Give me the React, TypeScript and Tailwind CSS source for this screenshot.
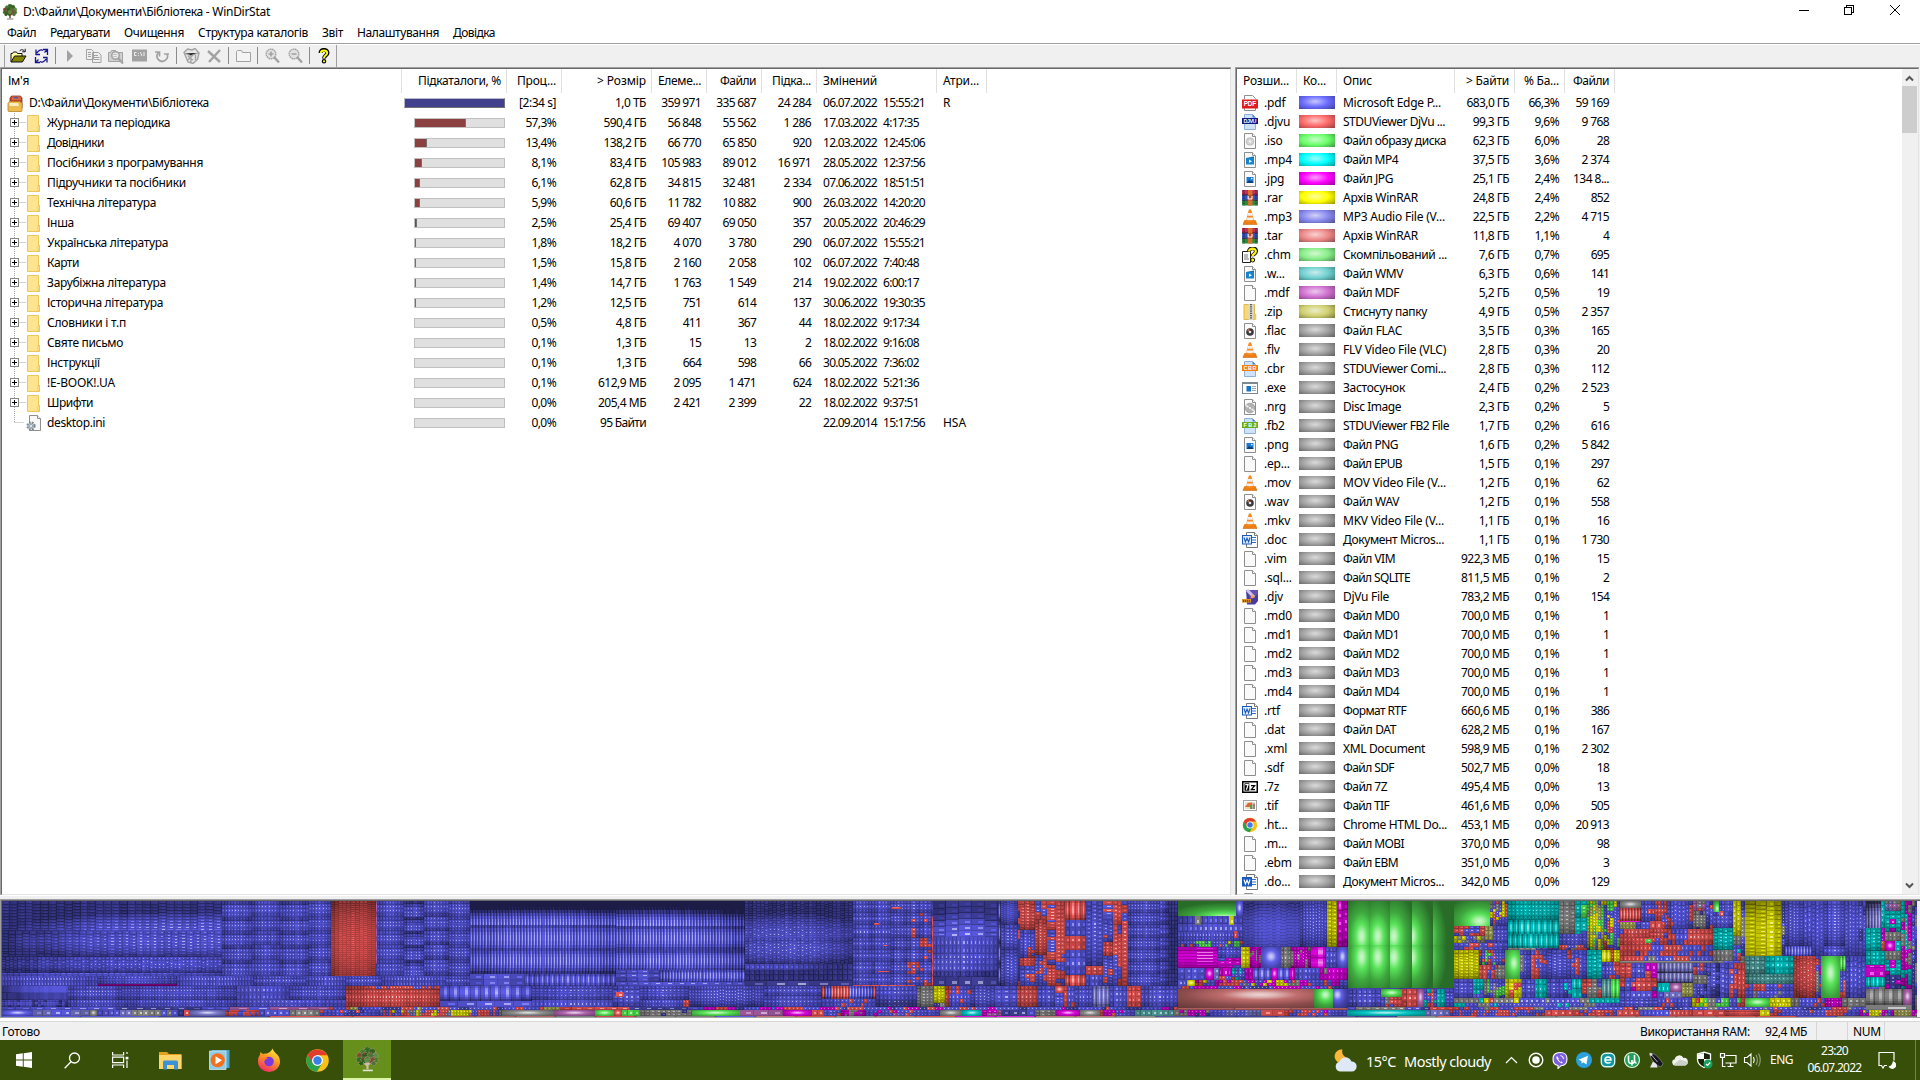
import React, { useLayoutEffect, useRef, useState } from "react";

/* ---------- text ---------- */

/** Single-line text; when `w` is given the letter spacing is tuned so that the run is `w` pixels wide. */
function T({ children, w, className = "" }: { children: string; w?: number; className?: string }) {
  const ref = useRef<HTMLSpanElement>(null);
  const [ls, setLs] = useState<number | null>(null);
  useLayoutEffect(() => {
    if (w && ref.current && ls === null) {
      setLs((w - ref.current.getBoundingClientRect().width) / children.length);
    }
  }, [w, children, ls]);
  return (
    <span
      ref={ref}
      className={"inline-block whitespace-pre " + className}
      style={w ? { letterSpacing: ls === null ? "0px" : ls + "px" } : undefined}
    >
      {children}
    </span>
  );
}

/* ---------- directory data ---------- */

type Dir = [string, number, number, string, string, string, string, string, string, string, string];
const DIRS: Dir[] = [
  ["Журнали та періодика", 123, 57.3, "57,3%", "590,4 ГБ", "56 848", "55 562", "1 286", "17.03.2022", "4:17:35", ""],
  ["Довідники", 57, 13.4, "13,4%", "138,2 ГБ", "66 770", "65 850", "920", "12.03.2022", "12:45:06", ""],
  ["Посібники з програмування", 156, 8.1, "8,1%", "83,4 ГБ", "105 983", "89 012", "16 971", "28.05.2022", "12:37:56", ""],
  ["Підручники та посібники", 139, 6.1, "6,1%", "62,8 ГБ", "34 815", "32 481", "2 334", "07.06.2022", "18:51:51", ""],
  ["Технічна література", 109, 5.9, "5,9%", "60,6 ГБ", "11 782", "10 882", "900", "26.03.2022", "14:20:20", ""],
  ["Інша", 27, 2.5, "2,5%", "25,4 ГБ", "69 407", "69 050", "357", "20.05.2022", "20:46:29", ""],
  ["Українська література", 121, 1.8, "1,8%", "18,2 ГБ", "4 070", "3 780", "290", "06.07.2022", "15:55:21", ""],
  ["Карти", 32, 1.5, "1,5%", "15,8 ГБ", "2 160", "2 058", "102", "06.07.2022", "7:40:48", ""],
  ["Зарубіжна література", 119, 1.4, "1,4%", "14,7 ГБ", "1 763", "1 549", "214", "19.02.2022", "6:00:17", ""],
  ["Історична література", 116, 1.2, "1,2%", "12,5 ГБ", "751", "614", "137", "30.06.2022", "19:30:35", ""],
  ["Словники і т.п", 79, 0, "0,5%", "4,8 ГБ", "411", "367", "44", "18.02.2022", "9:17:34", ""],
  ["Святе письмо", 76, 0, "0,1%", "1,3 ГБ", "15", "13", "2", "18.02.2022", "9:16:08", ""],
  ["Інструкції", 53, 0, "0,1%", "1,3 ГБ", "664", "598", "66", "30.05.2022", "7:36:02", ""],
  ["!E-BOOK!.UA", 68, 0, "0,1%", "612,9 МБ", "2 095", "1 471", "624", "18.02.2022", "5:21:36", ""],
  ["Шрифти", 46, 0, "0,0%", "205,4 МБ", "2 421", "2 399", "22", "18.02.2022", "9:37:51", ""],
  ["desktop.ini", 58, 0, "0,0%", "95 Байти", "", "", "", "22.09.2014", "15:17:56", "HSA"],
];

/* ---------- extension data ---------- */

type Ext = [string, string, string, string, string, string, string];
const G = "bg-[#a0a0a0]";
const EXTS: Ext[] = [
  ["pdf", ".pdf", "bg-[#6a6aff]", "Microsoft Edge P...", "683,0 ГБ", "66,3%", "59 169"],
  ["djvu", ".djvu", "bg-[#ff6a6a]", "STDUViewer DjVu ...", "99,3 ГБ", "9,6%", "9 768"],
  ["iso", ".iso", "bg-[#6aff6a]", "Файл образу диска", "62,3 ГБ", "6,0%", "28"],
  ["video", ".mp4", "bg-[#00ffff]", "Файл MP4", "37,5 ГБ", "3,6%", "2 374"],
  ["image", ".jpg", "bg-[#ff00ff]", "Файл JPG", "25,1 ГБ", "2,4%", "134 8..."],
  ["rar", ".rar", "bg-[#ffff00]", "Архів WinRAR", "24,8 ГБ", "2,4%", "852"],
  ["vlc", ".mp3", "bg-[#8888ee]", "MP3 Audio File (V...", "22,5 ГБ", "2,2%", "4 715"],
  ["rar", ".tar", "bg-[#ee8888]", "Архів WinRAR", "11,8 ГБ", "1,1%", "4"],
  ["chm", ".chm", "bg-[#88ee88]", "Скомпільований ...", "7,6 ГБ", "0,7%", "695"],
  ["video", ".w...", "bg-[#70d0d0]", "Файл WMV", "6,3 ГБ", "0,6%", "141"],
  ["file", ".mdf", "bg-[#d070d0]", "Файл MDF", "5,2 ГБ", "0,5%", "19"],
  ["zip", ".zip", "bg-[#d0d070]", "Стиснуту папку", "4,9 ГБ", "0,5%", "2 357"],
  ["audio", ".flac", G, "Файл FLAC", "3,5 ГБ", "0,3%", "165"],
  ["vlc", ".flv", G, "FLV Video File (VLC)", "2,8 ГБ", "0,3%", "20"],
  ["cbr", ".cbr", G, "STDUViewer Comi...", "2,8 ГБ", "0,3%", "112"],
  ["exe", ".exe", G, "Застосунок", "2,4 ГБ", "0,2%", "2 523"],
  ["disc", ".nrg", G, "Disc Image", "2,3 ГБ", "0,2%", "5"],
  ["fb2", ".fb2", G, "STDUViewer FB2 File", "1,7 ГБ", "0,2%", "616"],
  ["image", ".png", G, "Файл PNG", "1,6 ГБ", "0,2%", "5 842"],
  ["file", ".ep...", G, "Файл EPUB", "1,5 ГБ", "0,1%", "297"],
  ["vlc", ".mov", G, "MOV Video File (V...", "1,2 ГБ", "0,1%", "62"],
  ["audio", ".wav", G, "Файл WAV", "1,2 ГБ", "0,1%", "558"],
  ["vlc", ".mkv", G, "MKV Video File (V...", "1,1 ГБ", "0,1%", "16"],
  ["doc", ".doc", G, "Документ Micros...", "1,1 ГБ", "0,1%", "1 730"],
  ["file", ".vim", G, "Файл VIM", "922,3 МБ", "0,1%", "15"],
  ["file", ".sql...", G, "Файл SQLITE", "811,5 МБ", "0,1%", "2"],
  ["djv", ".djv", G, "DjVu File", "783,2 МБ", "0,1%", "154"],
  ["file", ".md0", G, "Файл MD0", "700,0 МБ", "0,1%", "1"],
  ["file", ".md1", G, "Файл MD1", "700,0 МБ", "0,1%", "1"],
  ["file", ".md2", G, "Файл MD2", "700,0 МБ", "0,1%", "1"],
  ["file", ".md3", G, "Файл MD3", "700,0 МБ", "0,1%", "1"],
  ["file", ".md4", G, "Файл MD4", "700,0 МБ", "0,1%", "1"],
  ["doc", ".rtf", G, "Формат RTF", "660,6 МБ", "0,1%", "386"],
  ["file", ".dat", G, "Файл DAT", "628,2 МБ", "0,1%", "167"],
  ["file", ".xml", G, "XML Document", "598,9 МБ", "0,1%", "2 302"],
  ["file", ".sdf", G, "Файл SDF", "502,7 МБ", "0,0%", "18"],
  ["7z", ".7z", G, "Файл 7Z", "495,4 МБ", "0,0%", "13"],
  ["tif", ".tif", G, "Файл TIF", "461,6 МБ", "0,0%", "505"],
  ["chrome", ".ht...", G, "Chrome HTML Do...", "453,1 МБ", "0,0%", "20 913"],
  ["file", ".m...", G, "Файл MOBI", "370,0 МБ", "0,0%", "98"],
  ["file", ".ebm", G, "Файл EBM", "351,0 МБ", "0,0%", "3"],
  ["docx", ".do...", G, "Документ Micros...", "342,0 МБ", "0,0%", "129"],
  ["file", "", "", "", "", "", ""],
];
const DESC_W: Record<string, number> = {
  "Microsoft Edge P...": 98, "STDUViewer DjVu ...": 102, "Файл образу диска": 103, "Файл MP4": 55, "Файл JPG": 50,
  "Архів WinRAR": 75, "MP3 Audio File (V...": 102, "Скомпільований ...": 104, "Файл WMV": 60, "Файл MDF": 56,
  "Стиснуту папку": 84, "Файл FLAC": 59, "FLV Video File (VLC)": 103, "STDUViewer Comi...": 103, "Застосунок": 62,
  "Disc Image": 58, "STDUViewer FB2 File": 106, "Файл PNG": 55, "Файл EPUB": 59, "MOV Video File (V...": 103,
  "Файл WAV": 56, "MKV Video File (V...": 101, "Документ Micros...": 101, "Файл VIM": 52, "Файл SQLITE": 67,
  "DjVu File": 46, "Файл MD0": 56, "Файл MD1": 56, "Файл MD2": 56, "Файл MD3": 56, "Файл MD4": 56, "Формат RTF": 63,
  "Файл DAT": 53, "XML Document": 82, "Файл SDF": 51, "Файл 7Z": 44, "Файл TIF": 46, "Chrome HTML Do...": 104,
  "Файл MOBI": 61, "Файл EBM": 55,
};

/** Width of a run of figures and units in the list font. */
function numW(s: string) {
  let w = 0;
  for (const c of s) {
    if (c >= "0" && c <= "9") w += 6.1;
    else if (c === "," || c === "." || c === ":") w += 2.7;
    else if (c === " ") w += 3.1;
    else if (c === "%") w += 9.6;
    else if (c === "М") w += 11;
    else if (c === "Г") w += 5.4;
    else if (c === "Т") w += 6.3;
    else w += 6.8;
  }
  return w;
}
const Num = ({ s }: { s: string }) => (s ? <T w={s === "[2:34 s]" ? 37 : s === "95 Байти" ? 46 : numW(s)}>{s}</T> : null);

/* ---------- icons ---------- */

function Page({ children }: { children?: React.ReactNode }) {
  return (
    <>
      <path d="M2.5.5h8l3 3v12h-11z" fill="#fafafa" stroke="#8e8e8e" />
      <path d="M10.5.5v3h3" fill="#fff" stroke="#8e8e8e" />
      {children}
    </>
  );
}

function Banner({ color, label }: { color: string; label: string }) {
  return (
    <>
      <path d="M2.5.5h8l3 3v12h-11z" fill="#cfe2f7" stroke="#8fb0d8" />
      <path d="M10.5.5v3h3z" fill="#3f7fd0" />
      <rect y="4" width="16" height="6" fill={color} />
      <text x="8" y="9" fontSize="5.4" fontWeight="700" fill="#fff" textAnchor="middle" textLength="13" fontFamily="Liberation Sans, sans-serif">{label}</text>
    </>
  );
}

function Chrome() {
  return (
    <>
      <circle cx="8" cy="8" r="7.2" fill="#fbc116" />
      <path d="M1.77 4.4A7.2 7.2 0 0 0 7.6 15.2L11 9.7 8 8 4.8 9z" fill="#2ba24c" />
      <path d="M1.77 4.4 5 9.7 8 8V4.6h6.2A7.2 7.2 0 0 0 1.77 4.4z" fill="#e33b2e" />
      <circle cx="8" cy="8" r="3.5" fill="#fff" />
      <circle cx="8" cy="8" r="2.7" fill="#3a7ee8" />
    </>
  );
}

function FileIcon({ kind }: { kind: string }) {
  let body: React.ReactNode = <Page />;
  if (kind === "pdf")
    body = (
      <>
        <path d="M2.5 4V.5h8l3 3V4M2.5 12v3.5h11V12" fill="#fafafa" stroke="#8e8e8e" />
        <rect y="4.5" width="16" height="9" fill="#e01b1b" />
        <text x="8" y="11.4" fontSize="6.4" fontWeight="700" fill="#fff" textAnchor="middle" textLength="12.5" fontFamily="Liberation Sans, sans-serif">PDF</text>
      </>
    );
  else if (kind === "djvu") body = <Banner color="#0a1a80" label="DJVU" />;
  else if (kind === "cbr") body = <Banner color="#f57f0e" label="CBR" />;
  else if (kind === "fb2") body = <Banner color="#5fb01c" label="FB2" />;
  else if (kind === "iso")
    body = <Page><circle cx="8" cy="8.5" r="3.8" fill="#d4d4d4" stroke="#a8a8a8" strokeWidth=".6" /><circle cx="8" cy="8.5" r="1.2" fill="#f5f5f5" /></Page>;
  else if (kind === "disc")
    body = <Page><circle cx="8" cy="9" r="4.8" fill="#b4b4b4" stroke="#888" strokeWidth=".6" /><path d="m8 9-4-2.5M8 9l4 2.6" stroke="#eee" strokeWidth="1.6" /><circle cx="8" cy="9" r="1.6" fill="#f5f5f5" stroke="#888" strokeWidth=".5" /></Page>;
  else if (kind === "video")
    body = <Page><rect x="4" y="6" width="8" height="6.5" fill="#1583cf" /><path d="m4 6 8-1.6V6z" fill="#0e6cb0" /><path d="m7 7.6 3 1.7-3 1.7z" fill="#fff" /></Page>;
  else if (kind === "image")
    body = <Page><rect x="4.5" y="6" width="7" height="6" fill="#1a7ad0" /><path d="m4.5 12 2.6-3 1.6 1.4 1-.8 1.8 2.4z" fill="#0c3c78" /><circle cx="9.8" cy="7.6" r=".8" fill="#fff" /></Page>;
  else if (kind === "audio")
    body = <Page><circle cx="8" cy="9" r="3.8" fill="#3a3a3a" /><path d="M8 9 5 7.2 6.8 5.6z" fill="#c87a50" /><circle cx="8" cy="9" r="1.3" fill="#e8e0f0" /></Page>;
  else if (kind === "rar")
    body = (
      <>
        <rect x="0" y="0" width="16" height="5" fill="#c22f57" /><rect x="0" y="5" width="16" height="5.5" fill="#3455b8" /><rect x="0" y="10.5" width="16" height="5" fill="#2c8a3d" />
        <path d="M0 4.8h16M0 10.3h16" stroke="#2a1a3c" strokeWidth=".8" />
        <path d="M2 0v15.5M14 0v15.5" stroke="#201838" strokeWidth="1" strokeDasharray="1.5 1" />
        <rect x="6" y="0" width="4.4" height="15.5" fill="#d8702a" /><rect x="5" y="5" width="6.4" height="5.5" fill="#b34a30" />
        <path d="M6.2 6v3h3.8V6" stroke="#fff" fill="none" />
      </>
    );
  else if (kind === "vlc")
    body = (
      <>
        <path d="M2.6 11.5h10.8l1.6 4H1z" fill="#ef7d10" stroke="#b95c08" strokeWidth=".5" />
        <path d="M6.8.8q1.2-1 2.4 0L12.2 12q-4.2 2.4-8.4 0z" fill="#f58a1f" />
        <path d="M5.9 4h4.2l.7 2.7H5.200zM4.700 8.600h6.600l.5 2q-3.800 1.500-7.600 0z" fill="#eef0f4" />
      </>
    );
  else if (kind === "chm")
    body = (
      <>
        <path d="M.5 4.5h8v11h-8z" fill="#fff" stroke="#222" /><path d="M2 8h4M2 10h4M2 12h5" stroke="#555" strokeWidth=".8" />
        <path d="M7 4.5C7 .2 14.5.2 14 4.6c-.3 2.4-3.3 2.2-3.3 4.6" fill="none" stroke="#111" strokeWidth="4" />
        <path d="M7 4.5C7 .8 14.2.8 13.8 4.6c-.3 2.2-3.1 2.2-3.1 4.4" fill="none" stroke="#ffee10" strokeWidth="2.3" />
        <circle cx="10.7" cy="13" r="2" fill="#ffee10" stroke="#111" />
      </>
    );
  else if (kind === "zip")
    body = (
      <>
        <path d="M2 .5h10.5v15H2z" fill="#f8d974" stroke="#e0b848" /><rect x="6.5" y="0" width="5" height="16" fill="#d7d7d2" />
        <path d="M9 0v15.5" stroke="#5c5c5c" strokeWidth="2" strokeDasharray="1.2 1" /><rect x="12" y="10" width="2" height="5.5" fill="#f2cd60" stroke="#e0b848" strokeWidth=".5" />
      </>
    );
  else if (kind === "exe")
    body = (
      <>
        <rect x=".5" y="2.5" width="15" height="11" fill="#fff" stroke="#7e8890" /><path d="M0 3h16" stroke="#7e8890" strokeWidth="2" />
        <rect x="4.5" y="6" width="4.5" height="5.5" fill="#1673cc" /><path d="M10 6.5h4M10 8.5h4M10 10.5h4" stroke="#9aa4ac" />
      </>
    );
  else if (kind === "doc" || kind === "docx")
    body = (
      <>
        <path d="M4.5.5h8l3 3v12h-11z" fill="#fff" stroke="#777" /><path d="M12.5.5v3h3" fill="#fff" stroke="#777" />
        <path d="M10 5.5h4M10 8h4M10 10.5h4" stroke="#2f6fd0" />
        <rect x=".5" y="3.5" width="9" height="8.5" fill={kind === "docx" ? "#185abd" : "#e4eefb"} stroke="#185abd" />
        <path d="m2 5.5 1.4 4.4L5 6.2l1.6 3.7L8 5.5" fill="none" stroke={kind === "docx" ? "#fff" : "#185abd"} strokeWidth="1.1" />
      </>
    );
  else if (kind === "djv")
    body = (
      <>
        <path d="M4 1h12v11l-3 3.5H5z" fill="#4a3a9c" /><path d="M4 1h12v4L9 11z" fill="#6450b4" /><path d="m5 1 7 7" stroke="#ccc4ec" strokeWidth="3" /><path d="m10 5 3 3.4-4.6.8z" fill="#f0a83c" />
        <rect x="0" y="10" width="9" height="3.6" fill="#e09428" /><path d="M1 12h7" stroke="#6a3a0c" strokeWidth="1.4" strokeDasharray="1.3 .7" />
      </>
    );
  else if (kind === "7z")
    body = (
      <>
        <rect y="2" width="16" height="12" fill="#000" /><rect x="1.5" y="3.5" width="13" height="9" fill="#fff" /><rect x="2.5" y="4.3" width="4.8" height="7.4" fill="#000" />
        <path d="M3.3 5.7h2.8L4.4 10.8" stroke="#fff" fill="none" strokeWidth="1.2" /><path d="M9 6.6h3.6L9.4 10.6H13" stroke="#000" fill="none" strokeWidth="1.3" />
      </>
    );
  else if (kind === "tif")
    body = (
      <>
        <rect x="1.5" y="2.5" width="13" height="10" fill="#fff" stroke="#a4a4a4" /><rect x="3" y="4" width="10" height="7" fill="#e8e0d0" />
        <path d="m3 9 3-4 4-.6V9z" fill="#e0662c" /><rect x="8" y="7" width="2" height="4" fill="#58a040" /><rect x="10.5" y="5.5" width="2.5" height="5.5" fill="#98867a" />
      </>
    );
  else if (kind === "chrome") body = <Chrome />;
  return <svg width="16" height="16" viewBox="0 0 16 16" className="block shrink-0">{body}</svg>;
}

const LEAVES = [
  [8, 2.2, 2.2], [5, 3.4, 2], [11, 3.2, 2.1], [3, 5.6, 1.9], [13, 5.6, 1.9], [6.5, 5.5, 2.2], [9.8, 5.8, 2.2], [2.8, 8.2, 1.8], [13.2, 8.4, 1.8], [5.6, 8.4, 2], [10.6, 8.6, 2], [8, 8, 2], [4, 10.4, 1.5], [12, 10.5, 1.5],
];
const LEAF_FILL = ["#2f6b22", "#4a7a30", "#33601f", "#7c4a2c", "#5d8b48", "#2a5a1c", "#4f7038"];
function Tree({ size, pale }: { size: number; pale?: boolean }) {
  return (
    <svg width={size} height={size} viewBox="0 0 16 16" className="block shrink-0">
      <path d="M8 6.5v7.8M8 12 5.4 9.5M8 11.4l3-2.4" stroke={pale ? "#d0bca8" : "#5b4028"} strokeWidth="1.4" />
      {LEAVES.map(([x, y, r], i) => (
        <circle key={i} cx={x} cy={y} r={r} fill={LEAF_FILL[i % 7]} stroke={pale ? "#b9a68c" : "#5f7a4c"} strokeWidth=".45" strokeDasharray=".8 .7" />
      ))}
      <path d="M5.4 4.2h1M9.6 3.8h1M7.4 6.6h1M11.6 7h1M4 7.4h1M9 8.8h1" stroke="#a44336" strokeWidth=".8" />
      <path d="M5 15h6.4" stroke={pale ? "#e4e4d8" : "#89796a"} strokeWidth="1" />
    </svg>
  );
}

const FolderIcon = () => (
  <svg width="13" height="17" viewBox="0 0 13 17" className="block">
    <path d="M.5.5h11v9.8h1v6.2H.5z" fill="#ffe48f" stroke="#ebc859" />
    <path d="M11 16V11q0-.8.8-.8t.8.8v5z" fill="#ffeaa6" stroke="#e6bd45" strokeWidth=".7" />
  </svg>
);

/* ---------- toolbar ---------- */

const Ico = ({ children, w = 16 }: { children: React.ReactNode; w?: number }) => (
  <svg width={w} height="16" viewBox={"0 0 " + w + " 16"} className="block shrink-0">{children}</svg>
);
const Sep = ({ m }: { m: string }) => <span className={"h-[17px] w-px shrink-0 bg-[#8a8a8a] " + m} />;
const DIM = "#a2a2a2";

function Toolbar() {
  return (
    <div className="flex h-[22px] items-center bg-[#f0f0f0] pb-px pl-[4px]">
      <span className="h-[22px] w-px shrink-0 bg-[#a0a0a0]" />
      <span className="ml-[5px]">
        <Ico w={17}>
          <path d="M1 14V5.5h1.500L3.500 4h3l1 1.500H12V8" fill="#ffff9c" stroke="#111" /><path d="m1 14 3.600-6H16l-3.600 6z" fill="#848400" stroke="#111" />
          <path d="M9.500 3.200C11 1 13.200 1.400 14.600 3.400M15.200.800v3h-3" fill="none" stroke="#111" />
        </Ico>
      </span>
      <span className="ml-[7px]">
        <Ico w={15}>
          <path d="M2 7V1.500M1.500 6.500H6M3 5C4.500 1.800 7.500 1.500 9 2.500" fill="none" stroke="#14148c" strokeWidth="1.300" />
          <path d="M9 1.500h4.500V6M13 2l-2.500 2.500M13.500 4v3" fill="none" stroke="#14148c" strokeWidth="1.300" />
          <path d="M13 9v5.500M13.500 9.500H9M12 11C10.500 14.200 7.500 14.500 6 13.500" fill="none" stroke="#14148c" strokeWidth="1.300" />
          <path d="M6 14.500H1.500V10M2 14l2.500-2.500M1.500 12V9" fill="none" stroke="#14148c" strokeWidth="1.300" />
        </Ico>
      </span>
      <Sep m="ml-[6px]" />
      <span className="ml-[10px]"><Ico w={8}><path d="M1 2v12l6-6z" fill={DIM} /></Ico></span>
      <span className="ml-[12px]">
        <Ico>
          <path d="M.5 1.500h5l2 2v8h-7zM6.500 4.500h6l2.500 2.500v7.500h-8.500z" fill="#f0f0f0" stroke={DIM} /><path d="M2 4.500h3M2 6.500h3M2 8.500h3M8 7.500h4M8 9.500h5.500M8 11.500h5.500" stroke={DIM} />
        </Ico>
      </span>
      <span className="ml-[6px]">
        <Ico>
          <path d="M.5 4.500h2l1-2h4l1 2h6v9H.5z" fill="#d0d0d0" stroke={DIM} /><circle cx="7.500" cy="7.500" r="3.800" fill="#e8e8e8" stroke={DIM} strokeWidth="1.500" /><path d="M5.500 6.500h4M5.500 8.500h4" stroke={DIM} strokeDasharray="1 1" /><path d="m10 10 5 5.500" stroke={DIM} strokeWidth="2.200" />
        </Ico>
      </span>
      <span className="ml-[8px]">
        <Ico w={15}>
          <path d="M0 1.500h15v12H0z" fill={DIM} /><path d="M4.500 4.500H2.500v3h2M6.500 5v.800M6.500 7v.800M8.500 4.200l1.500 4M12 4v4" stroke="#f0f0f0" fill="none" />
        </Ico>
      </span>
      <span className="ml-[8px]"><Ico w={15}><path d="M3.500 4.500A5.200 5.200 0 1 0 12 6M0 4h4.500v4.500M9 6h5" fill="none" stroke={DIM} strokeWidth="1.700" /></Ico></span>
      <Sep m="ml-[6px]" />
      <span className="ml-[6px]">
        <Ico w={17}>
          <path d="M1 4.500 4.500 1 9 2l3-1.500 4 4.500-1.500 6.500-4.500 4-5-1.500z" fill="#e6e6e6" stroke={DIM} strokeWidth="1.400" /><path d="m2 5.500 6 2L15 5M8 8v6M5 8l5 4M10 7 5 12M12.500 7v5" stroke={DIM} strokeWidth="1.300" />
        </Ico>
      </span>
      <span className="ml-[7px]"><Ico w={14}><path d="m1 3 12 11M13 2 2 14" stroke={DIM} strokeWidth="2.400" /></Ico></span>
      <Sep m="ml-[7px]" />
      <span className="ml-[7px]"><Ico><path d="M.5 13.500v-10l1-1h4l1 2h8v9z" fill="#f4f4f4" stroke={DIM} /></Ico></span>
      <Sep m="ml-[5px]" />
      {["M6 3.500v5M3.500 6h5", "M3.500 6h5"].map((d, i) => (
        <span key={i} className={i ? "ml-[8px]" : "ml-[7px]"}>
          <Ico w={15}><circle cx="6" cy="6" r="4.800" fill="#e2e2e2" stroke={DIM} strokeWidth="1.400" strokeDasharray="1.600 .5" /><path d={d} stroke={DIM} strokeWidth="1.600" /><path d="m9 9 5 5.500" stroke={DIM} strokeWidth="2.400" /></Ico>
        </span>
      ))}
      <Sep m="ml-[6px]" />
      <span className="ml-[8px]">
        <Ico w={12}>
          <path d="M2.500 5C2.500.800 9.500.800 9.500 5 9.500 7.200 6 7.500 6 10.500" fill="none" stroke="#000" strokeWidth="4" />
          <path d="M2.700 5C3 1.600 9.200 1.600 9.200 5 9.200 7.200 6 7.500 6 10" fill="none" stroke="#ffff00" strokeWidth="1.900" />
          <circle cx="6" cy="13.300" r="1.700" fill="#ffff00" stroke="#000" strokeWidth="1.200" />
        </Ico>
      </span>
      <span className="ml-[6px] h-[22px] w-px shrink-0 bg-[#a0a0a0]" />
    </div>
  );
}

/* ---------- directory list ---------- */

const GRID_L = "grid grid-cols-[400px_105px_55px_90px_55px_55px_55px_120px_50px]";
const HEAD_L: [string, number, boolean][] = [
  ["Ім'я", 21, false], ["Підкаталоги, %", 83, true], ["Проц...", 39, true], ["> Розмір", 49, true], ["Елеме...", 43, true],
  ["Файли", 36, true], ["Підка...", 39, true], ["Змінений", 54, false], ["Атри...", 36, false],
];

function Cell({ children, right }: { children?: React.ReactNode; right?: boolean }) {
  return <div className={"flex items-center px-[6px] " + (right ? "justify-end" : "")}>{children}</div>;
}

function DateCell({ d, t }: { d: string; t: string }) {
  return (
    <div className="flex items-center gap-[6px] pl-[6px]">
      <T w={54}>{d}</T>
      <T w={numW(t)}>{t}</T>
    </div>
  );
}

function DirList() {
  return (
    <div className="flex h-[825px] w-[1228px] flex-col overflow-hidden bg-white">
      <div className={GRID_L + " h-[24px]"}>
        {HEAD_L.map(([s, w, r]) => (
          <div key={s} className={"flex items-center border-r border-[#e0e0e0] " + (r ? "justify-end pr-[5px]" : "pl-[6px]")}>
            <T w={w}>{s}</T>
          </div>
        ))}
      </div>
      <div className={GRID_L + " h-[20px]"}>
        <div className="flex items-center pl-[5px]">
          <svg width="17" height="17" viewBox="0 0 17 17" className="block">
            <path d="M3 7V3L4.500 1h9L15 3v10H3z" fill="#b8452e" stroke="#7c3220" strokeWidth=".8" /><path d="M5 1.500h8.500l.8 3.500H4.500z" fill="#e0663c" /><path d="M7 2h4l.5 1.500H6.500z" fill="#5a58a8" />
            <path d="M1 8.500 2.500 6.500h10L15 8v7.500q0 1-1 1H2q-1 0-1-1z" fill="#eebb4e" stroke="#b8821c" strokeWidth=".8" /><path d="M2.500 8h8.500l1 3H2.500z" fill="#fbeec0" />
          </svg>
          <T w={180} className="ml-[5px]">{"D:\\Файли\\Документи\\Бібліотека"}</T>
        </div>
        <div className="flex items-center pl-[2px]"><div className="h-[10px] w-[101px] border border-t-[#b8b8c8] border-r-[#707070] border-b-[#707070] border-l-[#b8b8c8] bg-[#40408c]" /></div>
        <Cell right><Num s="[2:34 s]" /></Cell>
        <Cell right><Num s="1,0 ТБ" /></Cell>
        <Cell right><Num s="359 971" /></Cell>
        <Cell right><Num s="335 687" /></Cell>
        <Cell right><Num s="24 284" /></Cell>
        <DateCell d="06.07.2022" t="15:55:21" />
        <Cell><T>R</T></Cell>
      </div>
      {DIRS.map(([name, nw, pct, ps, size, items, files, subs, d, t, attr], i) => {
        const last = i === DIRS.length - 1;
        return (
          <div key={name} className={GRID_L + " h-[20px]"}>
            <div className="flex items-center pl-[7px]">
              <svg width={last ? 15 : 17} height="20" viewBox={last ? "0 0 15 20" : "0 0 17 20"} className="block shrink-0">
                <path d={last ? "M5.500 0v10" : "M5.500 0v20"} stroke="#a8a8a8" strokeDasharray="1 1" />
                <path d="M5.500 9.500H17" stroke="#a8a8a8" strokeDasharray="1 1" />
                {!last && (
                  <>
                    <rect x="1.500" y="5.500" width="8" height="8" fill="#fff" stroke="#848484" /><path d="M3 9.500h5M5.500 7v5" stroke="#000" />
                  </>
                )}
              </svg>
              {last ? (
                <svg width="17" height="17" viewBox="0 0 17 17" className="block">
                  <path d="M5.500.5h8l3 3v12h-11z" fill="#f8f8f8" stroke="#8e8e8e" /><path d="M13.500.5v3h3" fill="#fff" stroke="#8e8e8e" />
                  <circle cx="7" cy="11" r="3.600" fill="#b9c3ca" stroke="#7c8890" strokeWidth="2" strokeDasharray="1.700 1.200" /><circle cx="7" cy="11" r="1.500" fill="#fff" stroke="#7c8890" strokeWidth=".7" />
                </svg>
              ) : (
                <span className="ml-px"><FolderIcon /></span>
              )}
              <T w={nw} className={last ? "ml-[6px]" : "ml-[7px]"}>{name}</T>
            </div>
            <div className="flex items-center pl-[12px]">
              <div className="flex h-[10px] w-[91px] border border-[#c0c0c0] bg-[#e0e0e0]">
                {pct > 0 && (
                  <div className="h-full border-r border-[#707070] bg-[#8c4040]" style={{ width: Math.max(1, Math.floor(pct * 0.9)) + "px" }} />
                )}
              </div>
            </div>
            <Cell right><Num s={ps} /></Cell>
            <Cell right><Num s={size} /></Cell>
            <Cell right><Num s={items} /></Cell>
            <Cell right><Num s={files} /></Cell>
            <Cell right><Num s={subs} /></Cell>
            <DateCell d={d} t={t} />
            <Cell>{attr ? <T w={23}>{attr}</T> : null}</Cell>
          </div>
        );
      })}
    </div>
  );
}

/* ---------- extension list ---------- */

const GRID_R = "grid grid-cols-[60px_40px_118px_60px_50px_50px]";
const HEAD_R: [string, number, boolean][] = [
  ["Розши...", 46, false], ["Ко...", 23, false], ["Опис", 29, false], ["> Байти", 43, true], ["% Ба...", 35, true], ["Файли", 36, true],
];

function ExtList() {
  return (
    <div className="flex h-[825px] w-[665px] flex-col overflow-hidden bg-white">
      <div className={GRID_R + " h-[24px] shrink-0"}>
        {HEAD_R.map(([s, w, r]) => (
          <div key={s} className={"flex items-center border-r border-[#e0e0e0] " + (r ? "justify-end pr-[5px]" : "pl-[6px]")}>
            <T w={w}>{s}</T>
          </div>
        ))}
      </div>
      {EXTS.map(([kind, ext, color, desc, bytes, pct, files], i) => (
        <div key={i} className={GRID_R + " h-[19px] shrink-0"}>
          <div className="flex items-center gap-[6px] pl-[5px]"><FileIcon kind={kind} /><T className="tracking-[-0.2px]">{ext}</T></div>
          <div className="flex items-center pl-[2px]">
            {color && <div className={"h-[13px] w-[36px] bg-[radial-gradient(ellipse_75%_85%_at_45%_42%,rgba(255,255,255,0.62)_0%,rgba(255,255,255,0)_50%,rgba(0,0,0,0.42)_100%)] " + color} />}
          </div>
          <Cell>{desc ? <T w={DESC_W[desc]}>{desc}</T> : null}</Cell>
          <Cell right><Num s={bytes} /></Cell>
          <Cell right><Num s={pct} /></Cell>
          <Cell right>{files.endsWith("...") ? <T w={36}>{files}</T> : <Num s={files} />}</Cell>
        </div>
      ))}
    </div>
  );
}

/* ---------- treemap ---------- */

const RGB: Record<string, [number, number, number]> = {
  B: [92, 92, 232], R: [232, 84, 84], G: [84, 226, 84], C: [0, 196, 196], M: [216, 0, 216], Y: [222, 222, 0], g: [138, 138, 138],
  P: [120, 120, 205], S: [190, 104, 104], T: [80, 156, 156], V: [170, 96, 170], O: [170, 170, 90], D: [66, 66, 160],
};
function shade(c: string, f: number) {
  const v = RGB[c].map((k) => Math.round(f <= 1 ? k * f : k + (255 - k) * Math.min(1, (f - 1) * 1.5)));
  return "rgb(" + v.join(",") + ")";
}

/* x0, y0, x1, y1, colours, cell width, cell height, peak x, peak y */
type Region = [number, number, number, number, string, number, number, number?, number?];
const MAP: Region[] = [
  [2, 901, 222, 931, "B", 8, 3, 0.8, 1], [2, 931, 222, 957, "B", 7, 3, 0.75, 0.4], [2, 957, 222, 973, "B", 4, 2.5, 0.7, 0.4], [2, 973, 222, 976, "B", 6, 2],
  ...([901, 917, 931, 945, 960] as number[]).flatMap((y): Region[] => {
    const y1 = y === 901 ? 917 : y === 960 ? 976 : y + (y === 945 ? 15 : 14);
    return [
      [222, y, 252, y1, "B", 3, 4, 0.5, 0.6], [252, y, 280, y1, "B", 3, 4, 0.5, 0.5], [280, y, 309, y1, "B", 3, 4, 0.5, 0.6], [309, y, 331, y1, "B", 3, 3, 0.5, 0.5],
      [377, y, 404, y1, "B", 3, 4, 0.5, 0.5], [404, y, 424, y1, "B", 3, 3, 0.5, 0.7], [424, y, 449, y1, "B", 3, 4, 0.5, 0.4], [449, y, 470, y1, "B", 3, 3, 0.5, 0.5],
    ];
  }),
  [331, 901, 376, 976, "R", 4, 2, 0.5, 0.55], [376, 901, 377, 976, "VDG", 1, 12],
  [2, 976, 98, 986, "B", 3, 5], [98, 976, 177, 984, "B", 3, 3], [98, 984, 177, 986, "M", 80, 2, 0.5, 2], [177, 976, 254, 986, "B", 3, 5], [254, 976, 306, 986, "B", 3, 3], [306, 976, 346, 986, "B", 3, 5], [346, 976, 382, 986, "B", 3, 4], [382, 976, 446, 986, "B", 3, 5], [446, 976, 470, 986, "B", 3, 3],
  [470, 901, 616, 925, "B", 3, 24, 0.5, 1], [470, 925, 616, 951, "B", 3, 26, 0.5, 0.5], [470, 951, 616, 974, "B", 3, 23, 0.5, 0.4], [470, 974, 525, 986, "B", 14, 6], [525, 974, 616, 986, "B", 5, 12],
  [2, 986, 68, 1000, "B", 2, 8, 0.8, 0.3], [2, 1000, 68, 1007, "BBDB", 3, 2], [68, 986, 122, 1000, "B", 3, 4], [68, 1000, 122, 1007, "B", 3, 3], [122, 986, 237, 1000, "B", 3, 3], [122, 1000, 237, 1007, "B", 3, 3], [237, 986, 290, 1000, "B", 4, 6], [290, 986, 346, 1000, "B", 3, 4], [237, 1000, 346, 1007, "B", 4, 4],
  [346, 986, 440, 1007, "R", 3, 4, 0.5, 0.5], [366, 986, 440, 989, "RRB", 3, 3], [440, 986, 532, 1001, "B", 10, 15, 0.5, 0.4], [440, 1001, 532, 1007, "B", 18, 6], [532, 986, 613, 1000, "B", 4, 3], [532, 1000, 613, 1007, "B", 4, 7], [613, 986, 640, 1007, "B", 5, 4], [616, 992, 624, 997, "R", 8, 5],
  [2, 1007, 230, 1010, "BBD", 14, 3], [230, 1007, 330, 1010, "MDVB", 20, 3], [330, 1007, 560, 1010, "BBBORRD", 4, 3], [560, 1007, 700, 1010, "RBRD", 12, 3], [700, 1007, 1178, 1010, "BBRBMBD", 4, 3],
  [2, 1010, 33, 1016, "B", 31, 6], [33, 1010, 90, 1016, "BP", 10, 6], [90, 1010, 97, 1016, "g", 7, 6], [97, 1010, 184, 1016, "BDPBBDg", 6, 6], [184, 1010, 190, 1016, "R", 6, 6], [190, 1010, 225, 1016, "P", 35, 6], [225, 1010, 259, 1016, "RRB", 2, 2], [259, 1010, 290, 1016, "BPD", 6, 6], [290, 1010, 320, 1016, "g", 6, 6], [320, 1010, 380, 1016, "BRBD", 4, 3], [380, 1010, 502, 1016, "RRBgBPYR", 3, 3], [502, 1010, 554, 1016, "g", 52, 6], [554, 1010, 595, 1016, "V", 41, 6], [595, 1010, 614, 1016, "G", 19, 6], [614, 1010, 622, 1016, "R", 8, 6], [622, 1010, 640, 1016, "GRB", 6, 6],
  [2, 1016, 160, 1017, "B", 80, 1], [160, 1016, 270, 1017, "D", 80, 1], [270, 1016, 436, 1017, "R", 80, 1], [436, 1016, 1917, 1017, "BMgDRSg", 40, 1],
  [616, 901, 745, 926, "B", 3, 25, 0.3, 1], [616, 926, 745, 950, "B", 3, 24, 0.4, 0.5], [616, 950, 745, 970, "B", 3, 20, 0.4, 0.5], [616, 970, 660, 982, "B", 10, 4], [660, 970, 745, 982, "B", 3, 12], [616, 982, 745, 986, "B", 12, 4],
  [745, 901, 853, 938, "B", 4, 2.5, 0.4, 0.95], [745, 938, 853, 964, "B", 4, 2.5, 0.4, 0.4], [745, 964, 853, 981, "B", 5, 5, 0.2, -0.2], [745, 981, 853, 986, "D", 20, 5],
  ...([0, 1, 2, 3, 4, 5, 6] as number[]).flatMap((k): Region[] => {
    const y = 901 + k * 12.2;
    const e = k === 6 ? 986 : y + 12.2;
    return [
      [853, y, 872, e, "B", 3, 4], [872, y, 891, e, "B", 3, 4], [891, y, 907, e, "B", 3, 3], [907, y, 920, e, "BBBBBBR", 4, 3], [920, y, 932, e, "BBBBBR", 4, 3],
      [1128, y, 1160, e, "B", 3, 3], [1160, y, 1178, e, "B", 3, 4, -0.2, 0.4],
    ];
  }),
  [874, 923, 880, 925, "R", 6, 2], [883, 945, 888, 946, "R", 5, 1], [878, 971, 890, 972, "R", 12, 1], [892, 907, 901, 909, "R", 9, 2], [853, 985, 916, 986, "R", 9, 1],
  [932, 901, 933, 986, "RD", 1, 12],
  [933, 901, 998, 937, "B", 12, 6, 0.45, 0.95], [933, 937, 998, 954, "B", 4, 8], [933, 954, 998, 959, "B", 4, 5], [933, 959, 998, 977, "B", 4, 6, 0.4, 0.3], [933, 977, 998, 986, "D", 14, 9], [998, 901, 1001, 986, "D", 3, 20],
  [1001, 901, 1018, 925, "B", 3, 2], [1001, 925, 1018, 950, "B", 4, 3], [1001, 950, 1018, 986, "B", 4, 3], [1018, 901, 1020, 986, "DR", 2, 3],
  [1020, 901, 1035, 930, "R", 5, 3], [1020, 930, 1035, 958, "BBBR", 4, 3], [1020, 958, 1035, 966, "R", 4, 3], [1020, 966, 1035, 986, "BR", 6, 4], [1035, 901, 1047, 920, "RBR", 6, 4], [1035, 920, 1047, 955, "R", 4, 3], [1035, 955, 1047, 986, "BBR", 4, 3], [1047, 901, 1056, 930, "RB", 9, 3], [1047, 930, 1056, 965, "BRB", 9, 3], [1047, 965, 1056, 986, "R", 4, 3], [1056, 901, 1065, 986, "RRRRB", 4, 4],
  [1065, 901, 1086, 920, "R", 5, 19], [1065, 920, 1086, 936, "B", 5, 8], [1065, 936, 1086, 950, "R", 5, 7], [1065, 950, 1086, 975, "B", 5, 8], [1065, 975, 1086, 986, "R", 5, 11], [1086, 901, 1103, 966, "B", 5, 4], [1086, 966, 1103, 975, "R", 5, 5], [1086, 975, 1103, 986, "B", 4, 5],
  [1103, 901, 1113, 920, "BR", 10, 4], [1103, 920, 1113, 942, "BBR", 5, 4], [1103, 942, 1113, 956, "R", 4, 4], [1103, 956, 1113, 986, "BBR", 5, 3], [1113, 901, 1122, 925, "R", 4, 4], [1113, 925, 1122, 986, "BRR", 5, 4], [1122, 901, 1128, 986, "RRB", 6, 4],
  [640, 986, 689, 1000, "B", 4, 3], [640, 1000, 683, 1007, "B", 3, 3], [683, 1000, 689, 1007, "R", 3, 3], [689, 986, 764, 1007, "B", 3, 3, 0.5, 0.4], [764, 986, 822, 996, "B", 4, 3], [764, 996, 822, 1007, "B", 4, 4], [822, 986, 876, 999, "BBBBR", 3, 13], [822, 999, 876, 1007, "BBRB", 4, 4], [876, 986, 917, 1000, "B", 4, 5], [876, 1000, 917, 1007, "D", 4, 4],
  [917, 986, 934, 1007, "g", 4, 3], [934, 986, 945, 1003, "Y", 4, 3], [934, 1003, 945, 1007, "gD", 3, 3], [945, 986, 971, 1007, "BBRB", 4, 4], [971, 986, 995, 1007, "B", 4, 3], [995, 986, 1017, 1007, "B", 8, 4], [1017, 986, 1037, 1007, "RRRRB", 4, 4], [1037, 986, 1055, 1007, "B", 5, 4], [1055, 986, 1064, 993, "R", 9, 7], [1055, 993, 1064, 1007, "B", 4, 4], [1064, 986, 1075, 1007, "BBR", 4, 5], [1075, 986, 1093, 1007, "B", 4, 4], [1093, 986, 1110, 1007, "P", 4, 21], [1110, 986, 1127, 1007, "B", 4, 5], [1127, 986, 1141, 1007, "R", 5, 6], [1141, 986, 1178, 1007, "B", 4, 4],
  [640, 1010, 692, 1016, "ggD", 5, 3], [692, 1010, 740, 1016, "G", 48, 6], [740, 1010, 783, 1016, "V", 14, 6], [783, 1010, 812, 1016, "M", 29, 6], [812, 1010, 824, 1016, "R", 6, 6], [824, 1010, 841, 1016, "BRB", 4, 3], [841, 1010, 866, 1016, "MMg", 2, 2], [866, 1010, 940, 1016, "BMRBVB", 4, 4], [940, 1010, 962, 1016, "g", 22, 6], [962, 1010, 982, 1016, "C", 20, 6], [982, 1010, 1002, 1016, "MMV", 5, 3], [1002, 1010, 1035, 1016, "BPD", 8, 6], [1035, 1010, 1056, 1016, "g", 5, 3], [1056, 1010, 1080, 1016, "M", 24, 6], [1080, 1010, 1100, 1016, "g", 20, 6], [1100, 1010, 1135, 1016, "BMRB", 4, 3], [1135, 1010, 1180, 1016, "TTg", 6, 6], [1180, 1010, 1210, 1016, "gMgD", 4, 3], [1210, 1010, 1261, 1016, "PB", 4, 3], [1261, 1010, 1285, 1016, "R", 12, 6], [1285, 1010, 1347, 1016, "RBRMgB", 4, 3],
  [1178, 901, 1236, 916, "G", 99, 99, 0.8, 1.1], [1236, 901, 1243, 916, "B", 7, 15], [1178, 916, 1243, 932, "B", 5, 8, 0.6, 0.6], [1195, 916, 1201, 925, "g", 6, 9], [1229, 916, 1234, 925, "Y", 5, 9], [1178, 932, 1243, 941, "B", 3, 4], [1178, 941, 1243, 947, "BBBDRBYG", 3, 3], [1234, 931, 1238, 938, "R", 4, 7],
  [1243, 901, 1300, 947, "B", 2, 3, 0.55, 0.6], [1300, 901, 1327, 947, "B", 3, 3], [1327, 901, 1337, 947, "Y", 5, 4], [1337, 901, 1348, 947, "M", 5, 8],
  [1178, 947, 1218, 968, "M", 40, 3], [1218, 947, 1241, 958, "B", 4, 3], [1218, 958, 1241, 968, "BPMB", 8, 3], [1241, 947, 1250, 968, "Y", 4, 4], [1250, 947, 1261, 968, "MMMg", 2, 2], [1261, 947, 1281, 968, "B", 99, 99], [1281, 947, 1291, 968, "g", 4, 4], [1291, 947, 1311, 968, "MMMMg", 3, 3], [1311, 947, 1326, 968, "M", 15, 10], [1326, 947, 1337, 968, "BBM", 4, 5], [1337, 947, 1348, 968, "B", 11, 21],
  [1178, 968, 1205, 980, "B", 7, 6], [1205, 968, 1214, 980, "M", 9, 12], [1214, 968, 1219, 980, "P", 5, 6], [1219, 968, 1232, 976, "M", 4, 8], [1219, 976, 1232, 980, "BR", 3, 4], [1232, 968, 1245, 980, "BBBRC", 3, 3], [1245, 968, 1253, 980, "M", 4, 6], [1253, 968, 1271, 980, "B", 6, 12], [1271, 968, 1278, 980, "M", 7, 12], [1278, 968, 1290, 980, "BPg", 6, 12], [1290, 968, 1295, 980, "M", 5, 12], [1295, 968, 1320, 980, "B", 4, 5], [1320, 968, 1348, 980, "MMBMg", 4, 5],
  [1178, 980, 1187, 986, "B", 4, 6], [1187, 980, 1195, 986, "Y", 8, 6], [1195, 980, 1348, 986, "BMBMRgBYM", 4, 3], [1178, 986, 1348, 989, "BMDBR", 4, 3],
  [1178, 989, 1314, 1008, "S", 999, 99, 0.6, 0.3], [1314, 989, 1333, 1008, "G", 99, 99, 0.6, 0.3], [1333, 989, 1348, 1008, "B", 99, 99, 0.3, 0.3], [1178, 1008, 1348, 1010, "gSD", 60, 2],
  ...([0, 1, 2, 3, 4] as number[]).flatMap((k): Region[] => {
    const px = [0.65, 0.42, 0.18, 0, -0.35][k];
    return [[1348 + k * 21.2, 901, 1369.2 + k * 21.2, 945, "G", 99, 99, px, 0.8], [1348 + k * 21.2, 945, 1369.2 + k * 21.2, 988, "G", 99, 99, px, 0.28]];
  }),
  [1348, 988, 1454, 989, "D", 50, 1],
  [1348, 989, 1381, 1007, "B", 5, 5], [1381, 989, 1402, 997, "G", 99, 99], [1381, 997, 1402, 1007, "BgRG", 4, 4], [1402, 989, 1417, 1007, "R", 6, 6], [1417, 989, 1424, 1007, "V", 99, 99], [1424, 989, 1437, 1007, "BRBBC", 3, 4], [1437, 989, 1445, 1007, "C", 4, 5], [1445, 989, 1454, 1007, "B", 5, 4], [1348, 1007, 1454, 1010, "DBgR", 8, 3],
  [1454, 901, 1490, 926, "G", 99, 99, 0.7, 0.8], [1490, 901, 1508, 926, "BBYBRg", 3, 3], [1454, 926, 1490, 936, "BBRBB", 5, 4], [1485, 926, 1493, 940, "O", 4, 5], [1493, 926, 1508, 945, "BRBB", 4, 4], [1454, 936, 1485, 943, "BBRgY", 4, 4], [1454, 943, 1508, 950, "BBPR", 5, 4],
  [1508, 901, 1559, 920, "C", 4, 4], [1508, 920, 1559, 934, "C", 6, 14, 0.5, 0.5], [1508, 934, 1559, 948, "C", 5, 14], [1508, 948, 1559, 950, "gD", 6, 2],
  [1559, 901, 1575, 934, "g", 5, 4], [1575, 901, 1587, 918, "CCG", 5, 4], [1575, 918, 1587, 935, "CBC", 5, 4], [1559, 934, 1587, 945, "B", 4, 4], [1559, 945, 1587, 950, "gBRD", 3, 3], [1587, 901, 1604, 950, "YOBYGg", 3, 3], [1604, 901, 1620, 950, "BBYGRB", 3, 3],
  [1454, 950, 1479, 979, "Y", 5, 3], [1479, 950, 1505, 965, "BGBBR", 3, 3], [1479, 965, 1495, 979, "RRB", 4, 5], [1495, 965, 1505, 979, "gBR", 4, 4], [1505, 950, 1520, 979, "G", 99, 99, 0.6, 0.45], [1520, 950, 1527, 979, "BBgB", 3, 4], [1527, 950, 1547, 979, "BBBBR", 4, 4], [1547, 950, 1567, 979, "B", 5, 3], [1567, 950, 1587, 979, "BBBBR", 4, 4], [1587, 950, 1602, 979, "C", 5, 4], [1602, 950, 1611, 962, "Y", 5, 12], [1602, 962, 1620, 979, "BBR", 4, 4], [1611, 950, 1620, 962, "BYR", 3, 3],
  [1454, 979, 1473, 998, "B", 5, 4], [1473, 979, 1484, 990, "C", 4, 4], [1473, 990, 1484, 998, "BC", 4, 4], [1484, 979, 1505, 998, "BBGBg", 3, 3], [1505, 979, 1522, 998, "YYYR", 4, 4], [1522, 979, 1535, 998, "B", 4, 5], [1535, 979, 1547, 998, "C", 4, 6], [1547, 979, 1560, 998, "BBR", 4, 4], [1560, 979, 1572, 998, "BBDC", 4, 4], [1572, 979, 1582, 998, "C", 5, 9], [1582, 979, 1602, 998, "BgBR", 5, 4], [1602, 979, 1611, 998, "T", 4, 19], [1611, 979, 1620, 998, "G", 4, 19],
  [1454, 998, 1620, 1003, "BBYBgRCMB", 5, 5], [1454, 1003, 1620, 1007, "BBBCRgBB", 4, 4], [1454, 1007, 1917, 1010, "BDRgBB", 5, 3],
  [1347, 1010, 1425, 1016, "C", 99, 99], [1425, 1010, 1450, 1016, "PRPB", 6, 6], [1450, 1010, 1545, 1016, "BRRBB", 3, 3], [1545, 1010, 1580, 1016, "R", 7, 6], [1580, 1010, 1617, 1016, "BBR", 4, 4], [1617, 1010, 1640, 1016, "R", 6, 6], [1640, 1010, 1693, 1016, "BRRB", 4, 6], [1693, 1010, 1725, 1016, "R", 10, 6], [1725, 1010, 1760, 1016, "R", 2, 2], [1760, 1010, 1770, 1016, "Y", 5, 6], [1770, 1010, 1860, 1016, "BBBBR", 4, 4], [1860, 1010, 1894, 1016, "BMYgB", 3, 3], [1894, 1010, 1912, 1016, "O", 4, 3], [1912, 1010, 1917, 1016, "Mg", 3, 3],
  [1620, 901, 1641, 908, "g", 99, 99], [1620, 908, 1641, 921, "R", 3, 13], [1620, 921, 1641, 922, "M", 20, 1], [1620, 922, 1636, 929, "O", 3, 3], [1636, 922, 1655, 929, "BRB", 5, 4], [1641, 901, 1655, 922, "BBBBR", 4, 4], [1655, 901, 1667, 921, "RRRRB", 3, 4], [1650, 921, 1662, 929, "R", 6, 8], [1662, 915, 1668, 929, "BR", 3, 4], [1667, 901, 1693, 929, "BBRBB", 4, 4], [1693, 901, 1706, 911, "gVR", 4, 4], [1693, 911, 1706, 929, "ggD", 3, 3], [1706, 901, 1713, 929, "BRBD", 3, 4],
  [1620, 929, 1650, 938, "RRRB", 4, 5], [1650, 929, 1668, 940, "BBRR", 4, 4], [1668, 929, 1713, 945, "RRRRB", 4, 5], [1620, 938, 1668, 945, "RBRR", 4, 4], [1645, 939, 1652, 943, "G", 7, 4], [1620, 945, 1713, 956, "RRRRB", 4, 5], [1620, 956, 1713, 961, "RBgB", 4, 4], [1620, 961, 1713, 963, "g", 80, 2],
  [1713, 901, 1719, 912, "G", 99, 99, 0.7, 0.7], [1719, 901, 1733, 915, "BBBR", 3, 4], [1713, 912, 1733, 928, "B", 4, 4], [1719, 911, 1724, 916, "R", 4, 5], [1713, 928, 1733, 950, "C", 5, 4], [1713, 950, 1733, 961, "g", 4, 6], [1733, 901, 1741, 936, "Y", 4, 5], [1741, 901, 1745, 963, "DBgR", 4, 4], [1733, 936, 1741, 945, "g", 4, 4], [1733, 945, 1741, 961, "BBRC", 4, 4], [1713, 961, 1745, 963, "gMB", 5, 2],
  [1620, 963, 1632, 978, "R", 6, 4], [1632, 963, 1645, 978, "B", 4, 5], [1645, 963, 1657, 971, "M", 5, 8], [1645, 971, 1657, 978, "MMR", 6, 4], [1620, 978, 1657, 991, "RBRRBM", 5, 5], [1620, 991, 1657, 998, "RBMB", 5, 5], [1657, 963, 1693, 983, "P", 4, 10, 0.6, 0.3], [1658, 983, 1670, 992, "C", 4, 9], [1670, 983, 1682, 992, "V", 99, 99], [1682, 983, 1693, 997, "O", 4, 4], [1658, 992, 1682, 998, "BgPD", 6, 5], [1693, 963, 1707, 975, "BRB", 4, 4], [1693, 975, 1707, 984, "g", 5, 4], [1693, 984, 1707, 998, "BDB", 4, 4], [1707, 963, 1720, 998, "BBD", 4, 4], [1720, 963, 1729, 998, "B", 4, 5], [1729, 963, 1738, 998, "BRB", 4, 5], [1738, 963, 1745, 998, "R", 4, 5],
  [1620, 998, 1658, 1007, "B", 5, 3], [1658, 998, 1678, 1007, "RRB", 4, 4], [1678, 998, 1692, 1007, "B", 4, 4], [1692, 998, 1745, 1007, "BGBRBgYB", 4, 5],
  [1745, 901, 1767, 956, "Y", 11, 4, 0.6, 0.6], [1767, 901, 1782, 956, "Y", 7, 4.4, 0.3, 0.6], [1782, 901, 1785, 956, "gDB", 3, 3],
  [1785, 901, 1804, 946, "B", 4, 3], [1804, 901, 1812, 946, "B", 4, 5], [1812, 901, 1824, 956, "B", 4, 4], [1785, 946, 1812, 956, "B", 3, 8], [1824, 901, 1845, 946, "B", 4, 3], [1845, 901, 1856, 956, "B", 4, 4], [1824, 946, 1845, 956, "B", 4, 3], [1856, 901, 1866, 956, "BBD", 4, 4],
  [1745, 956, 1765, 974, "T", 5, 5], [1765, 956, 1794, 974, "C", 5, 6], [1745, 974, 1794, 984, "T", 4, 4], [1745, 984, 1794, 991, "BBBR", 4, 3], [1745, 991, 1794, 998, "BBBg", 4, 3],
  [1794, 956, 1816, 998, "R", 3, 2.5, 0.6, 0.4], [1816, 956, 1821, 998, "MBgR", 3, 3], [1821, 956, 1840, 998, "G", 99, 99, 0.5, 0.4], [1840, 956, 1846, 971, "G", 3, 15], [1840, 971, 1846, 998, "BRB", 3, 4], [1846, 956, 1866, 998, "B", 4, 5],
  [1745, 998, 1770, 1007, "G", 99, 99], [1770, 998, 1791, 1003, "Y", 6, 5], [1770, 1003, 1791, 1007, "Y", 3, 4], [1791, 998, 1825, 1007, "BRBgB", 4, 4], [1825, 998, 1842, 1007, "MMY", 3, 3], [1842, 998, 1866, 1007, "gPBg", 6, 5],
  [1866, 901, 1881, 928, "P", 3, 27, 0.8, 0.7], [1881, 901, 1885, 928, "BMC", 3, 5], [1866, 928, 1881, 951, "C", 5, 4], [1881, 928, 1885, 951, "MR", 4, 4], [1866, 951, 1885, 965, "C", 5, 5], [1866, 965, 1885, 968, "M", 9, 3], [1866, 968, 1885, 977, "M", 9, 9], [1866, 977, 1885, 987, "C", 5, 9], [1866, 987, 1885, 989, "BMg", 3, 2],
  [1885, 901, 1901, 911, "gPV", 4, 3], [1885, 911, 1901, 932, "CCCM", 5, 4], [1885, 932, 1901, 941, "g", 4, 4], [1885, 941, 1895, 951, "M", 10, 10], [1895, 941, 1901, 951, "C", 6, 5], [1885, 951, 1901, 960, "g", 4, 4], [1885, 960, 1901, 975, "CCMM", 5, 4], [1885, 975, 1901, 989, "MMD", 5, 5], [1901, 901, 1912, 989, "MCCMMg", 4, 4],
  [1866, 989, 1903, 1005, "g", 9, 16, 0.5, 0.4], [1903, 989, 1912, 1005, "V", 9, 16], [1866, 1005, 1912, 1010, "g", 46, 5], [1912, 901, 1917, 1010, "BDDg", 3, 4],
];

type Paths = [string, string][];
type Solid = { c: string; x: number; y: number; w: number; h: number; px: number; py: number };

function buildTreemap() {
  let seed = 20220706;
  const rnd = () => {
    seed = (seed * 1664525 + 1013904223) >>> 0;
    return seed / 4294967296;
  };
  const put = (m: Map<string, string>, c: string, f: number, x: number, y: number, w: number, h: number) => {
    if (w <= 0 || h <= 0) return;
    const key = c + Math.max(6, Math.min(30, Math.round(f * 20)));
    m.set(key, (m.get(key) ?? "") + "M" + x + " " + y + "h" + w + "v" + h + "h" + -w + "z");
  };
  const layers: Paths[] = [];
  const solids: Solid[] = [];
  for (const [rx0, ry0, rx1, ry1, cols, cw, ch, px = 0.5, py = 0.45] of MAP) {
    const x0 = Math.round(rx0), y0 = Math.round(ry0), x1 = Math.round(rx1), y1 = Math.round(ry1);
    const w = x1 - x0, h = y1 - y0;
    if (cw >= 99 || (cw > 6 && ch > 5 && cols.length === 1 && w <= cw && h <= ch)) {
      solids.push({ c: cols[0], x: x0, y: y0, w, h, px, py });
      continue;
    }
    /* cell bodies, then their shaded rims, then their highlights */
    const body = new Map<string, string>(), rim = new Map<string, string>(), light = new Map<string, string>();
    const nx = Math.max(1, Math.round(w / cw)), ny = Math.max(1, Math.round(h / ch));
    let c = cols[Math.floor(rnd() * cols.length)];
    for (let i = 0; i < nx; i++) {
      const cx0 = x0 + Math.round((i * w) / nx), cx1 = x0 + Math.round(((i + 1) * w) / nx);
      const shift = ny > 5 ? rnd() * 0.5 : 0;
      const colGlow = rnd() * 0.1;
      for (let j = 0; j < ny; j++) {
        const cy0 = j === 0 ? y0 : Math.min(y1, y0 + Math.round(((j + shift) * h) / ny));
        const cy1 = j === ny - 1 ? y1 : Math.min(y1, y0 + Math.round(((j + 1 + shift) * h) / ny));
        const cwid = cx1 - cx0, chei = cy1 - cy0;
        if (cwid <= 0 || chei <= 0) continue;
        if (rnd() < 0.5) c = cols[Math.floor(rnd() * cols.length)];
        const u = ((cx0 + cx1) / 2 - x0) / w - px, v = ((cy0 + cy1) / 2 - y0) / h - py;
        const tall = chei > 9;
        const glow = Math.max(0, 1 - u * u * 1.7 - (tall ? 0 : v * v * 2.5));
        const f = 0.47 + 0.4 * glow + colGlow + rnd() * 0.03;
        if (tall) {
          const segs = 8;
          for (let s = 0; s < segs; s++) {
            const sy0 = cy0 + Math.round((s * chei) / segs), sy1 = cy0 + Math.round(((s + 1) * chei) / segs);
            const k = (s + 0.5) / segs - py;
            const ff = f + 0.06 - k * k * 1.3;
            put(body, c, ff, cx0, sy0, cwid, sy1 - sy0);
            if (cwid >= 3) {
              put(rim, c, ff - 0.2, cx1 - 1, sy0, 1, sy1 - sy0);
              put(light, c, ff + 0.32 - k * k, cx0 + Math.floor((cwid - 1) / 2), sy0, Math.max(1, Math.floor(cwid / 3)), sy1 - sy0);
            }
          }
        } else {
          if (chei >= 2) put(rim, c, f - 0.13, cx0, cy1 - 1, cwid, 1);
          if (cwid >= 3) put(rim, c, f - 0.15, cx1 - 1, cy0, 1, chei);
          put(body, c, f, cx0, cy0, cwid, chei);
          if (cwid >= 3 && chei >= 3)
            put(light, c, f + 0.1 + 0.32 * glow * glow, cx0 + Math.floor((cwid - 1) / 2), cy0 + Math.floor((chei - 1) / 2), Math.max(1, Math.floor(cwid / 2.5)), Math.max(1, Math.floor(chei / 2.5)));
          else if (cwid >= 5) put(light, c, f + 0.12 * glow, cx0 + 1, cy0, cwid - 3, 1);
        }
      }
    }
    layers.push([...body, ...rim, ...light]);
  }
  return { layers, solids };
}
const TREE = buildTreemap();

function Treemap() {
  return (
    <svg width="1915" height="116" viewBox="2 901 1915 116" className="block" shapeRendering="crispEdges">
      <rect x="2" y="901" width="1915" height="116" fill="#3c3c96" />
      {TREE.layers.map((paths, n) => (
        <g key={n}>
          {paths.map(([k, d], i) => (
            <path key={i} d={d} fill={shade(k[0], Number(k.slice(1)) / 20)} />
          ))}
        </g>
      ))}
      <defs>
        {TREE.solids.map((s, i) => (
          <radialGradient key={i} id={"cushion" + i} cx={s.px} cy={s.py} r="1">
            <stop offset="0" stopColor={shade(s.c, 1.48)} />
            <stop offset="0.12" stopColor={shade(s.c, 1.34)} />
            <stop offset="0.28" stopColor={shade(s.c, 1.02)} />
            <stop offset="0.55" stopColor={shade(s.c, 0.74)} />
            <stop offset="1" stopColor={shade(s.c, 0.48)} />
          </radialGradient>
        ))}
      </defs>
      {TREE.solids.map((s, i) => (
        <rect key={i} x={s.x} y={s.y} width={s.w} height={s.h} fill={"url(#cushion" + i + ")"} />
      ))}
    </svg>
  );
}

/* ---------- taskbar ---------- */

const Slot = ({ children, width = "w-[49px]" }: { children: React.ReactNode; width?: string }) => (
  <div className={"flex h-10 items-center justify-center " + width}>{children}</div>
);
const Tray = ({ children }: { children: React.ReactNode }) => (
  <span className="flex w-6 shrink-0 justify-center"><svg width="18" height="18" viewBox="0 0 18 18" className="block">{children}</svg></span>
);

function Taskbar() {
  return (
    <div className="flex h-10 items-center justify-between bg-[#374f09] font-['Noto_Sans','Open_Sans',sans-serif] text-[12px] text-white">
      <div className="flex h-10">
        <Slot width="w-[48px]"><svg width="16" height="16" viewBox="0 0 16 16"><path d="M0 2.300 6.800 1.300v6.300H0zM7.700 1.200 16 0v7.600H7.700zM0 8.400h6.800v6.300L0 13.700zM7.700 8.400H16V16l-8.300-1.200z" fill="#fff" /></svg></Slot>
        <Slot width="w-[48px]"><svg width="17" height="17" viewBox="0 0 17 17" fill="none" stroke="#fff" strokeWidth="1.300"><circle cx="10.500" cy="6" r="5" /><path d="M7 9.700.7 16.300" /></svg></Slot>
        <Slot width="w-[48px]"><svg width="17" height="16" viewBox="0 0 17 16" fill="none" stroke="#fff" strokeWidth="1.200"><path d="M.6 0v3h11V0M.6 16v-3h11v3M.6 5.200h11v5.500H.6zM15 0v2M15 8.500V16" /><path d="M13.600 4.800h2.800v2.600h-2.800z" fill="#fff" stroke="none" /></svg></Slot>
        <Slot width="ml-[2px] w-[49px]">
          <svg width="23" height="19" viewBox="0 0 23 19"><path d="M0 1h8l2 2h12.500v15H0z" fill="#e5a01c" /><path d="M0 4h22.500v14H0z" fill="#fdd568" /><path d="M4 18.500V11q0-1.500 1.500-1.500h12Q19 9.500 19 11v7.500h-4V14H8v4.500z" fill="#3b93d6" /></svg>
        </Slot>
        <Slot>
          <svg width="21" height="20" viewBox="0 0 21 20"><path d="M3 0h17.500v18H3z" fill="#4fa6cc" /><path d="M.5 1H17v18.500H.5z" fill="#93cbe4" stroke="#c9e8f4" strokeWidth=".8" /><circle cx="8.700" cy="10.200" r="7" fill="#f3701a" /><path d="m6.500 6.200 6.500 4-6.500 4z" fill="#fff" /></svg>
        </Slot>
        <Slot>
          <svg width="24" height="24" viewBox="0 0 24 24">
            <defs><linearGradient id="fx" x1=".8" y1="0" x2=".3" y2="1"><stop offset="0" stopColor="#fff04a" /><stop offset=".45" stopColor="#ff9a22" /><stop offset="1" stopColor="#f0286a" /></linearGradient></defs>
            <path d="M15.500.5q1 3 3.300 4.800 4.200 3.600 4.200 8.200A11 10.500 0 0 1 1 13.500Q.8 9.500 3 6.500q0-1.500.8-2.500.8 1.500 2.200 2 1.500-.6 3-.3Q14 4.500 15.500.5z" fill="url(#fx)" />
            <circle cx="12" cy="13.500" r="4.800" fill="#7a3ae0" /><path d="M5.500 10.500q2.500-2 5.500-.2-3 .7-4 3.200z" fill="#ff7a1c" />
          </svg>
        </Slot>
        <Slot><svg width="25" height="25" viewBox="0 0 16 16"><Chrome /></svg></Slot>
        <Slot width="ml-px w-[48px] border-b-2 border-[#dcf5a8] bg-[#66901b]"><Tree size={25} pale /></Slot>
      </div>
      <div className="flex h-10 items-center">
        <svg width="23" height="23" viewBox="0 0 23 23" className="block">
          <path d="M8.500.5A6.500 6.500 0 0 0 14 9 6.800 6.800 0 1 1 8.500.500z" fill="#fbb73b" /><path d="M6 22.500a5 5 0 0 1-.5-9.800 6.500 6.500 0 0 1 12-.2 5 5 0 0 1 .3 10z" fill="#dfe8f6" />
        </svg>
        <T w={30} className="mt-px ml-[9px] text-[14.500px]">15°C</T>
        <T w={87} className="mt-px ml-[8px] text-[14.500px]">Mostly cloudy</T>
        <svg width="13" height="8" viewBox="0 0 13 8" className="mr-[6px] ml-[14px] block"><path d="m1 7 5.500-5.500L12 7" fill="none" stroke="#fff" strokeWidth="1.200" /></svg>
        <Tray><circle cx="9" cy="9" r="6.800" fill="none" stroke="#fff" strokeWidth="1.400" /><circle cx="9" cy="9" r="3.800" fill="#fff" /></Tray>
        <Tray><path d="M9 1.500c5 0 7 1.500 7 6.500s-2 6.600-6 6.700L7 17.500v-3C3.300 14 2 12 2 8s2-6.500 7-6.500z" fill="#7d60dd" stroke="#fff" strokeWidth="1.100" /><path d="M6 5q-1.500 1 .5 4t4.500 3.500q1.500-1-.5-2l-1 .5L7.300 8.500l.5-1z" fill="#fff" /><path d="M9.500 4.500q3 .5 3 3.500" stroke="#fff" fill="none" /></Tray>
        <Tray><circle cx="9" cy="9" r="8" fill="#2aa0df" /><path d="m3.500 8.800 9.500-4-1.600 8.700-3.200-2.300-1.500 1.500-.3-2.700z" fill="#fff" /></Tray>
        <Tray><rect x="2.300" y="2.300" width="13.400" height="13.400" rx="4.500" fill="#0f97a0" stroke="#d8f2f2" strokeWidth="1.400" /><path d="M6 9h6q0-3-3-3T6 9t3 3q1.800 0 2.600-.8" fill="none" stroke="#fff" strokeWidth="1.600" /></Tray>
        <Tray><circle cx="9" cy="9" r="7.500" fill="#1f9e57" stroke="#e6f5ea" strokeWidth="1.200" /><path d="M5.500 4.500V9q0 3.500 3 3.500t3-3.500V4M9 9v5.500M11.500 9q0 3 2 3" fill="none" stroke="#fff" strokeWidth="1.600" /></Tray>
        <Tray><path d="M2.500 2q5.500.5 8.500 4t5 6.500L14 16Q4.500 13 2.500 2z" fill="#16161c" stroke="#9a9a9a" strokeWidth=".6" /><path d="m4.500 4 6 7" stroke="#d8d8d8" strokeWidth=".8" /><path d="m6 10.500-3 6h7.500l-1-3.500z" fill="#e4e4ea" /><circle cx="4" cy="3.500" r="1.400" fill="#d8d8d8" /></Tray>
        <Tray><path d="M4 14.500a3.200 3.200 0 0 1-.3-6.300 4.700 4.700 0 0 1 8.800-1.300 3.900 3.900 0 0 1 1.600 7.600z" fill="#f2f3ef" /><path d="M4 14.500h10.500q2.500-1 2.400-3.500L9 8.500q-4 3-6.500 5z" fill="#cdd2c8" /></Tray>
        <Tray><path d="M9 1.200 15.500 3v5.500q0 5-6.500 8-6.500-3-6.500-8V3z" fill="#16220a" stroke="#fff" strokeWidth="1.300" /><path d="M9 2v6H3V3.500zM9 8h6v1q0 3.500-6 6.500z" fill="#fff" /><circle cx="13" cy="13" r="4.500" fill="#17a05c" /><path d="m11 13 1.500 1.500 2.700-3" stroke="#fff" fill="none" strokeWidth="1.200" /></Tray>
        <Tray><path d="M6.500 4.500H17v7.500H6.500M11.500 12v3.500M8.500 15.500h6" stroke="#fff" fill="none" strokeWidth="1.200" /><path d="M1.500 2.500h4v3.800h-4zM3.500 6.500v9h3" stroke="#fff" fill="none" strokeWidth="1.200" /></Tray>
        <Tray><path d="M1.500 6.500h2.500L8 3v12l-4-3.500H1.500zM10.500 6q1.500 3 0 6" stroke="#fff" fill="none" strokeWidth="1.100" /><path d="M13 4q2.800 5 0 10M15.500 2.500q3.500 6.500 0 13" stroke="#93a37c" fill="none" strokeWidth="1.100" /></Tray>
        <T w={23} className="ml-[6px]">ENG</T>
        <div className="ml-[13px] flex h-10 w-[57px] flex-col items-center justify-center pb-[2px] leading-[17px]">
          <T w={27}>23:20</T>
          <T w={54}>06.07.2022</T>
        </div>
        <svg width="18" height="18" viewBox="0 0 18 18" className="mr-[19px] ml-[15px] block"><path d="M9 14.500H6.500L5 17l-1.500-2.500H1v-13h15v8" fill="none" stroke="#fff" strokeWidth="1.200" /><path d="M15 10a4 4 0 1 1-4.500 5.500Q14 15 15 10z" fill="#fff" /></svg>
        <span className="mr-1 h-10 w-px bg-[#75853f]" />
      </div>
    </div>
  );
}

/* ---------- window ---------- */

const MENU: [string, number][] = [
  ["Файл", 29], ["Редагувати", 60], ["Очищення", 60], ["Структура каталогів", 110], ["Звіт", 21], ["Налаштування", 82], ["Довідка", 42],
];

export default function App() {
  return (
    <div className="flex h-[1080px] w-[1920px] flex-col overflow-hidden bg-[#f0f0f0] font-['Noto_Sans','Open_Sans',sans-serif] text-[12px] leading-[16px] text-black">
      <div className="flex h-[23px] items-center justify-between bg-white pr-[20px] pl-[2px]">
        <div className="flex items-center"><Tree size={16} /><T w={247} className="ml-[5px]">{"D:\\Файли\\Документи\\Бібліотека - WinDirStat"}</T></div>
        <svg width="102" height="12" viewBox="0 0 102 12" className="mb-[3px] block" fill="none" stroke="#000" shapeRendering="crispEdges">
          <path d="M1 6.500h10M46.500 3.500h7v7h-7zM48.500 3.500v-2h7v7h-2" /><path d="m92 1 10 10M102 1 92 11" shapeRendering="auto" />
        </svg>
      </div>
      <div className="flex h-[20px] items-center gap-[14px] bg-white pb-px pl-[7px]">
        {MENU.map(([s, w]) => <T key={s} w={w}>{s}</T>)}
      </div>
      <div className="h-px bg-[#a0a0a0]" />
      <div className="h-px bg-white" />
      <Toolbar />

      <div className="flex h-[828px]">
        <div className="h-[828px] border-t border-l border-[#a0a0a0]">
          <div className="border-t border-r border-b border-l border-t-[#696969] border-r-[#e3e3e3] border-b-[#e3e3e3] border-l-[#696969]"><DirList /></div>
        </div>
        <div className="w-[4px]" />
        <div className="h-[828px] border-t border-l border-[#a0a0a0]">
          <div className="flex border-t border-r border-b border-l border-t-[#696969] border-r-[#e3e3e3] border-b-[#e3e3e3] border-l-[#696969]">
            <ExtList />
            <div className="flex h-[825px] w-[16px] flex-col bg-[#f0f0f0]">
              <svg width="15" height="17" viewBox="0 0 15 17" className="block"><path d="m4 11.500 3.500-3.500 3.500 3.500" fill="none" stroke="#555" strokeWidth="2" /></svg>
              <div className="h-[47px] w-[15px] bg-[#cdcdcd]" />
              <svg width="15" height="17" viewBox="0 0 15 17" className="mt-auto block"><path d="m4 6.500 3.500 3.500L11 6.500" fill="none" stroke="#555" strokeWidth="2" /></svg>
            </div>
          </div>
        </div>
      </div>

      <div className="h-[4px] border-t border-white" />
      <div className="h-[119px] border-t border-b border-l border-[#a0a0a0]">
        <div className="h-[117px] border-t border-l border-[#696969]"><Treemap /></div>
      </div>
      <div className="h-[3px] bg-white" />
      <div className="flex h-[19px] items-center justify-between border-t border-[#d7d7d7] pl-[2px]">
        <T w={38} className="mt-[2px]">Готово</T>
        <div className="flex h-[18px] items-center">
          <T w={110} className="mt-[2px]">Використання RAM:</T>
          <T w={42} className="mt-[2px] ml-[15px]">92,4 МБ</T>
          <span className="ml-[9px] h-[18px] w-px bg-[#d7d7d7]" />
          <span className="ml-[30px] h-[18px] w-px bg-[#d7d7d7]" />
          <T w={28} className="mt-[2px] ml-[5px]">NUM</T>
          <span className="mr-[35px] ml-[3px] h-[18px] w-px bg-[#d7d7d7]" />
        </div>
      </div>
      <Taskbar />
    </div>
  );
}
